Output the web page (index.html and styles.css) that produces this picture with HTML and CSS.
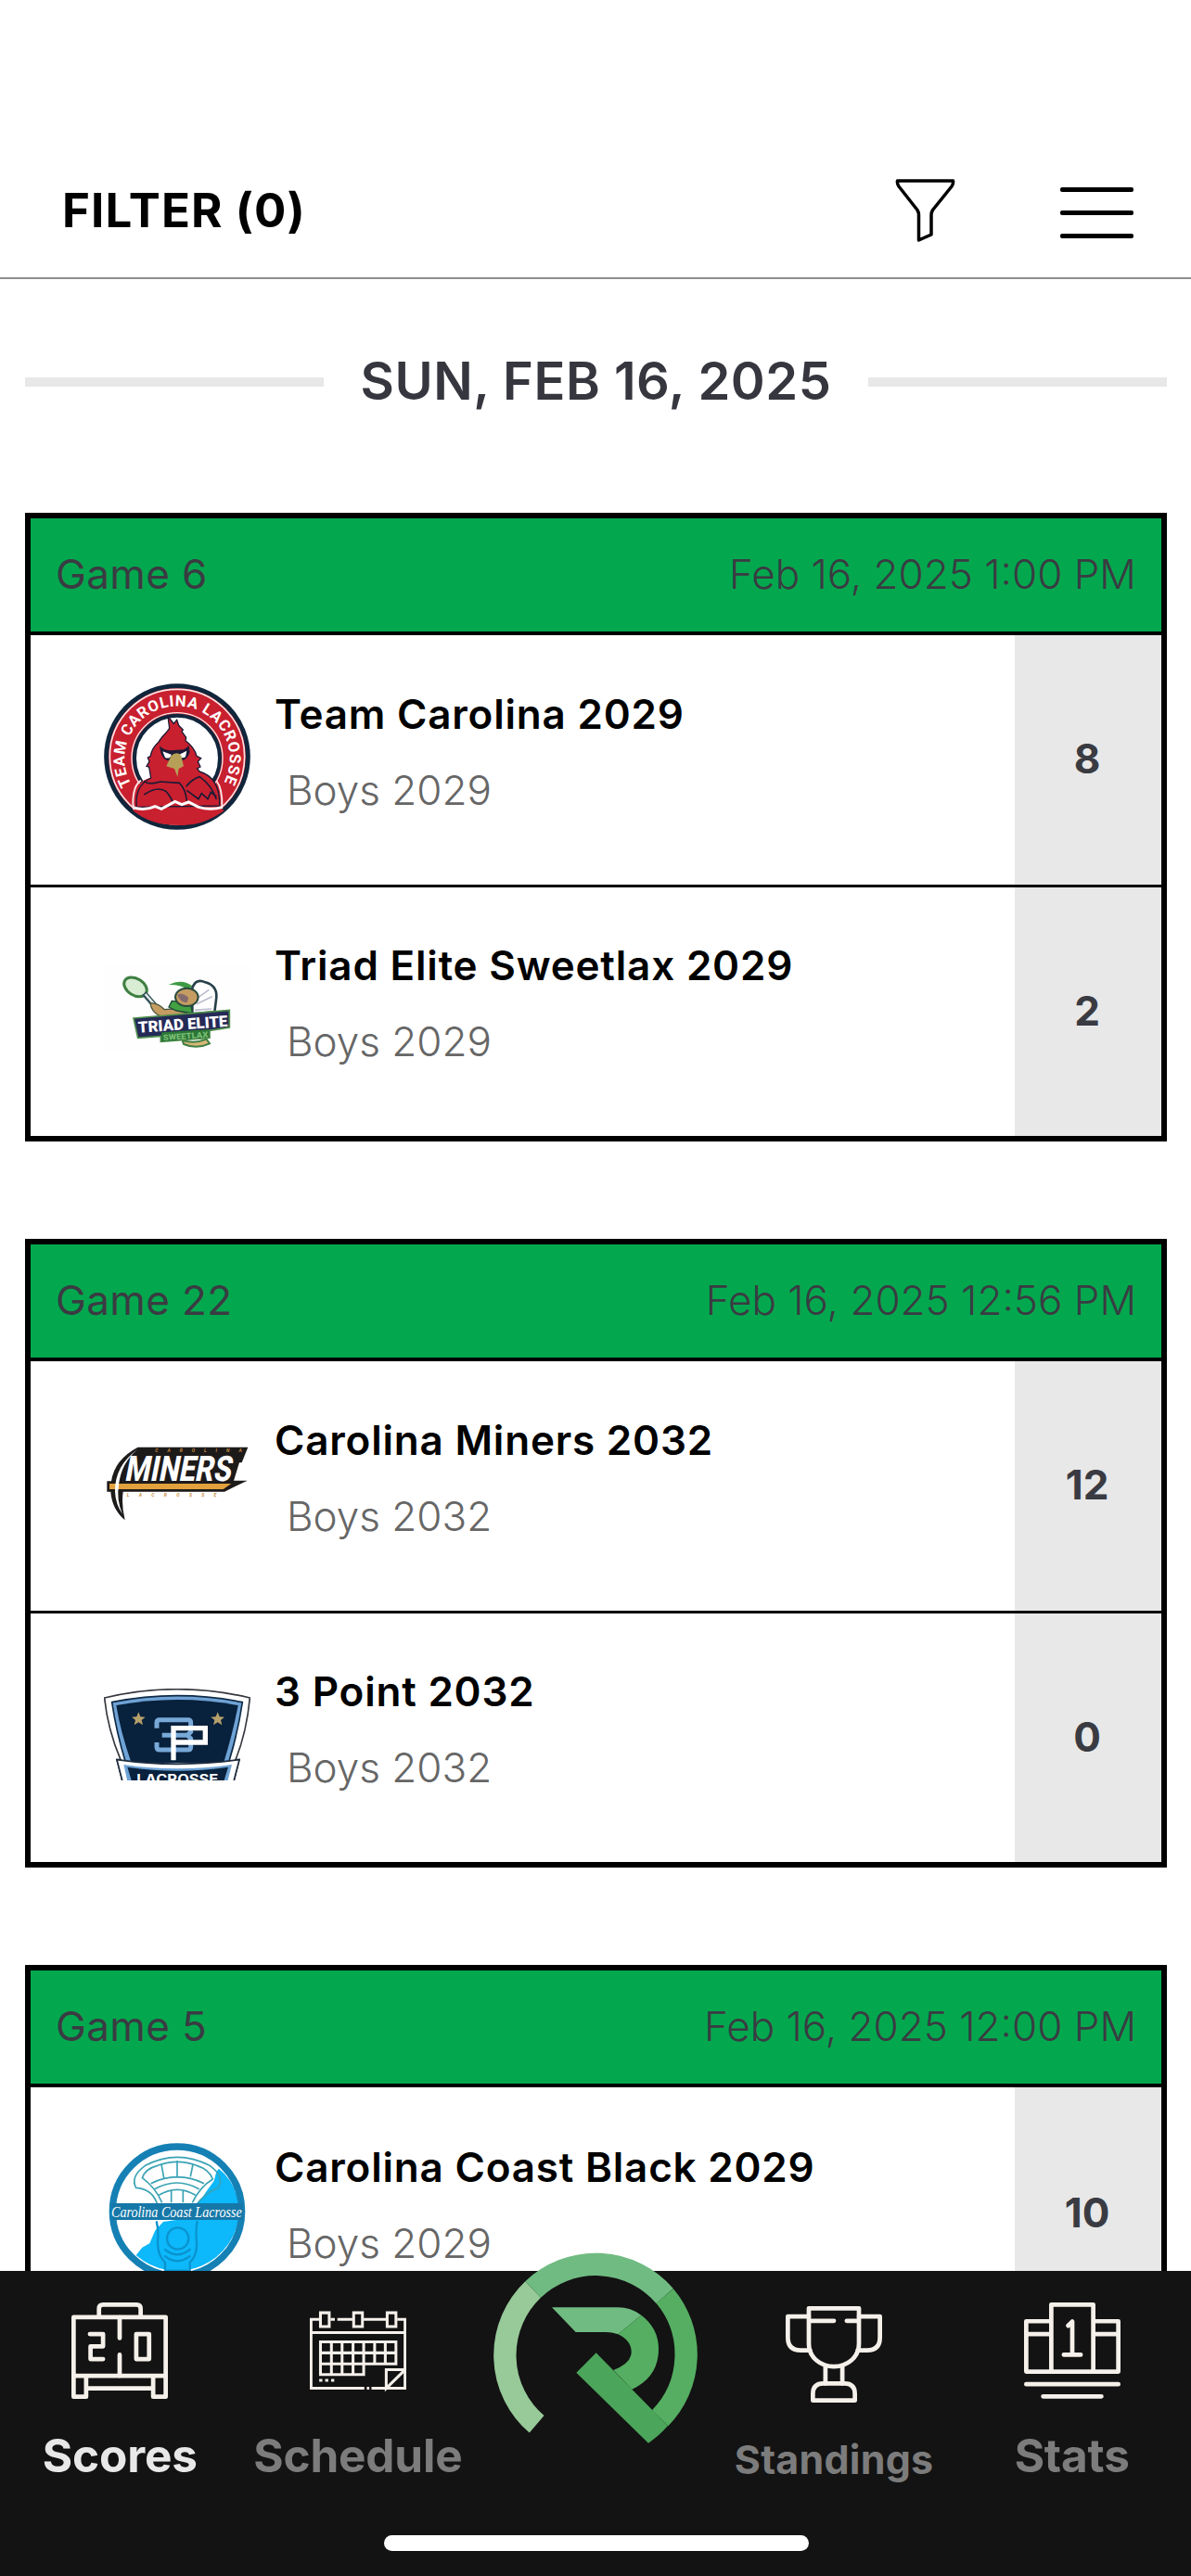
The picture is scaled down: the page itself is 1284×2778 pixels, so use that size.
FILE: index.html
```html
<!DOCTYPE html>
<html lang="en">
<head>
    <meta charset="UTF-8">
    <meta name="viewport" content="width=device-width, initial-scale=1.0">
    <title>Scores</title>
    <link rel="stylesheet" href="styles.css">
</head>
<body>
    <header class="top-bar">
        <span class="filter-label">FILTER (0)</span>
        <svg class="funnel-icon" viewBox="0 0 65 68">
            <path d="M2.500 2H62.500Q63 5 61 8L40.500 33.500Q39 36 39 39V60L25.500 66V39Q25.500 36 24 33.500L4 8Q2 5 2.500 2Z"/>
        </svg>
        <div class="menu-icon"><span></span><span></span><span></span></div>
    </header>

    <main class="content">
        <div class="date-row">
            <h1>SUN, FEB 16, 2025</h1>
        </div>

        <section class="game">
            <div class="game-header">
                <span class="game-name">Game 6</span>
                <span class="game-time">Feb 16, 2025 1:00 PM</span>
            </div>
            <div class="team-row">
                <svg class="team-logo" viewBox="66 50 474 474">
                    <circle cx="303" cy="287" r="229" fill="#c9202f" stroke="#10263c" stroke-width="15"/>
                    <circle cx="303" cy="287" r="218" fill="none" stroke="#fbe3e3" stroke-width="5"/>
                    <circle cx="303" cy="292" r="138" fill="#fff" stroke="#10263c" stroke-width="12"/>
                    <circle cx="303" cy="292" r="147" fill="none" stroke="#fbe3e3" stroke-width="4"/>
                    <path d="M164 450C150 400 175 368 215 355H390C430 370 450 400 440 450L455 462Q380 515 303 508Q220 510 160 462Z" fill="#c9202f"/>
                    <path d="M172 450C166 395 188 370 218 356L212 320L204 318L213 303L208 290L217 285C220 262 232 250 243 240C252 222 272 208 278 195L273 156L292 180L302 168L308 186L322 200L318 206L332 225L330 235C350 250 362 268 366 285L380 292L370 303L378 320L368 325L375 335C410 345 442 375 440 446Z" fill="#c9202f" stroke="#1c1a35" stroke-width="4"/>
                    <path d="M246 252Q262 270 292 266L325 264Q335 258 340 250L344 272Q336 296 318 300H276Q256 296 250 274Z" fill="#1c1a35"/>
                    <path d="M256 270L284 280Q280 296 264 290ZM334 268L310 280Q314 296 330 288Z" fill="#fff"/>
                    <path d="M283 285Q300 268 316 283L324 318L308 326L304 352L294 326L268 318Z" fill="#b6a057"/>
                    <path d="M196 366Q212 380 248 368L310 372Q330 390 334 430M196 410Q240 380 268 400Q285 420 290 438M332 384Q350 360 376 352Q415 380 430 425M334 396L372 424L382 406L402 424L412 402L430 416" fill="none" stroke="#1c1a35" stroke-width="5"/>
                    <path d="M160 452Q200 462 232 448L252 456L296 432L318 442L340 434L372 450Q410 462 450 450" fill="none" stroke="#fff" stroke-width="9"/>
                    <path d="M164 458L160 440Q160 380 186 364M448 450Q450 390 430 365" fill="none" stroke="#fbe3e3" stroke-width="6"/>
                    <path id="ring" d="M155 377A170 170 0 1 1 451 377" fill="none"/>
                    <text class="crest-text"><textPath href="#ring" textLength="700">TEAM CAROLINA LACROSSE</textPath></text>
                </svg>
                <div class="team-info">
                    <h2>Team Carolina 2029</h2>
                    <p>Boys 2029</p>
                </div>
                <div class="score">8</div>
            </div>
            <div class="team-row">
                <svg class="team-logo wide" viewBox="66 48 474 297">
                    <rect x="70" y="50" width="468" height="293" fill="#fdfefd"/>
                    <path d="M275 120Q320 98 352 124L340 136Q310 118 275 120Z" fill="#3f9a45"/>
                    <path d="M352 130Q364 98 394 112Q432 122 430 160L424 208L352 214Z" fill="#fff" stroke="#28404a" stroke-width="8"/>
                    <path d="M372 160L406 136M366 182L416 158M360 202L414 198" fill="none" stroke="#b9bccb" stroke-width="5"/>
                    <ellipse cx="168" cy="127" rx="40" ry="27" transform="rotate(32 168 127)" fill="#d9edd4" stroke="#3f7f42" stroke-width="9"/>
                    <path d="M196 148L245 204" stroke="#34505a" stroke-width="18"/>
                    <path d="M200 150L238 194" stroke="#e9f1ee" stroke-width="7"/>
                    <path d="M216 180Q238 176 262 200L290 198L346 216L250 222Q220 210 216 180Z" fill="#c59c62" stroke="#49563f" stroke-width="4"/>
                    <path d="M286 172L346 180L352 212L300 204L276 192Z" fill="#43a142" stroke="#234a3a" stroke-width="4"/>
                    <ellipse cx="334" cy="160" rx="37" ry="29" fill="#c59c62" stroke="#294a3e" stroke-width="6"/>
                    <path d="M304 152Q320 144 340 162L334 178Q310 174 304 152Z" fill="#836a6d"/>
                    <path d="M320 300Q360 312 398 296L408 310Q366 330 324 312Z" fill="#d9b778" stroke="#3f7f42" stroke-width="6"/>
                    <path d="M162 228L472 202V258L408 268V292L250 304V286L176 292Z" fill="#252a57" stroke="#4f8f4b" stroke-width="5"/>
                    <path d="M252 274L406 264V290L252 304Z" fill="#2b7537"/>
                    <text class="triad-text" x="178" y="275" textLength="290" lengthAdjust="spacingAndGlyphs" transform="rotate(-4 178 275)">TRIAD ELITE</text>
                    <text class="sweetlax-text" x="258" y="300" textLength="146" lengthAdjust="spacingAndGlyphs" transform="rotate(-4 258 300)">SWEETLAX</text>
                </svg>
                <div class="team-info">
                    <h2>Triad Elite Sweetlax 2029</h2>
                    <p>Boys 2029</p>
                </div>
                <div class="score">2</div>
            </div>
        </section>

        <section class="game">
            <div class="game-header">
                <span class="game-name">Game 22</span>
                <span class="game-time">Feb 16, 2025 12:56 PM</span>
            </div>
            <div class="team-row">
                <svg class="team-logo wide" viewBox="66 58 474 297">
                    <path d="M176 90H532L512 140H504L486 198H530L456 234H128Q122 275 134 326Q92 290 88 234H76V200H90Q100 130 176 90Z" fill="#1d1a1a"/>
                    <path d="M84 208H478L452 226H84Z" fill="#e2a13c"/>
                    <path d="M176 96Q100 150 102 234Q104 275 126 306Q106 262 114 212Q122 140 176 96Z" fill="#fff"/>
                    <text class="miners-text" x="132" y="198" textLength="344" lengthAdjust="spacingAndGlyphs" transform="translate(38 0) skewX(-11)">MINERS</text>
                    <text class="miners-small" x="232" y="107" textLength="280">CAROLINA</text>
                    <text class="miners-small" x="140" y="249" textLength="290">LACROSSE</text>
                </svg>
                <div class="team-info">
                    <h2>Carolina Miners 2032</h2>
                    <p>Boys 2032</p>
                </div>
                <div class="score">12</div>
            </div>
            <div class="team-row">
                <svg class="team-logo wide" viewBox="66 60 474 297">
                    <path d="M68 90Q303 34 538 90Q528 200 492 290H504L486 360H126L108 290H120Q78 190 68 90Z" fill="#fff" stroke="#35383d" stroke-width="5"/>
                    <path d="M92 104Q303 62 514 104Q500 200 470 298H136Q106 200 92 104Z" fill="#6fa3d6" stroke="#0f2b47" stroke-width="5"/>
                    <path d="M106 114Q303 78 500 114Q484 200 454 298H154Q120 200 106 114Z" fill="#08213c"/>
                    <path d="M108 290Q303 318 504 290L486 360H126Z" fill="#fff" stroke="#1d2c3f" stroke-width="5"/>
                    <path d="M130 306Q303 332 480 306L466 360H142Z" fill="#6fa3d6"/>
                    <path d="M142 314Q303 338 468 314L454 360H156Z" fill="#08213c"/>
                    <path id="star" d="M178 136L184 151L200 152L188 162L192 178L178 169L164 178L168 162L156 152L172 151Z" fill="#b6a06b"/>
                    <use href="#star" x="256"/>
                    <path d="M237 188V170Q237 161 246 161H338Q347 161 347 170V200L336 211H254M336 211L347 222V248Q347 258 338 258H246Q237 258 237 248V234" fill="none" stroke="#78a9d8" stroke-width="15"/>
                    <path d="M291 292V188H394V234H291" fill="none" stroke="#fff" stroke-width="16"/>
                    <text class="point-text" x="172" y="368" textLength="264" lengthAdjust="spacingAndGlyphs">LACROSSE</text>
                </svg>
                <div class="team-info">
                    <h2>3 Point 2032</h2>
                    <p>Boys 2032</p>
                </div>
                <div class="score">0</div>
            </div>
        </section>

        <section class="game">
            <div class="game-header">
                <span class="game-name">Game 5</span>
                <span class="game-time">Feb 16, 2025 12:00 PM</span>
            </div>
            <div class="team-row">
                <svg class="team-logo" viewBox="66 69 474 474">
                    <circle cx="303" cy="308" r="208" fill="#fff"/>
                    <path d="M438 170Q500 220 504 308A201 201 0 0 1 170 450L190 425L214 412L232 370L258 342L300 336L380 270L400 240L422 210L430 180Z" fill="#0db8fb"/>
                    <g fill="none" stroke="#3aa3b5" stroke-width="5">
                        <path d="M240 290Q226 236 170 232Q150 196 200 160Q303 106 408 160Q458 196 436 232Q390 250 364 290"/>
                        <path d="M254 280Q232 230 190 200Q200 170 240 160Q303 136 366 160Q406 172 418 204Q376 230 352 280"/>
                        <path d="M218 218Q303 176 390 218M230 236Q303 196 374 236M244 256Q303 220 362 256M303 144V200M252 156L260 200M354 156L346 196M284 238V280M322 238V280"/>
                    </g>
                    <g fill="none" stroke="#0a93cf" stroke-width="7">
                        <path d="M236 340Q244 370 240 410Q240 450 264 474V500H344V474Q368 450 366 410Q362 370 368 340"/>
                        <circle cx="305" cy="396" r="35"/>
                        <path d="M262 430Q303 466 346 430M262 452Q303 486 346 452"/>
                    </g>
                    <circle cx="303" cy="308" r="209" fill="none" stroke="#1580b4" stroke-width="22"/>
                    <rect x="92" y="282" width="424" height="54" fill="#1678a8"/>
                    <text class="coast-text" x="90" y="326" textLength="422" lengthAdjust="spacingAndGlyphs">Carolina Coast Lacrosse</text>
                </svg>
                <div class="team-info">
                    <h2>Carolina Coast Black 2029</h2>
                    <p>Boys 2029</p>
                </div>
                <div class="score">10</div>
            </div>
        </section>
    </main>

    <nav class="tab-bar">
        <a class="tab active" href="#">
            <svg class="tab-icon" viewBox="0 0 308 308">
                <path d="M88 47V20Q88 7 101 7H208Q221 7 221 20V47M7 47H301V301H261V234H301M7 47V301H47V234H7M47 234H261M47 274H261"/>
                <path d="M154 48V114M154 167V234M59 101H101V140H61V181H101M207 101H248V181H207Z"/>
            </svg>
            <span>Scores</span>
        </a>
        <a class="tab" href="#">
            <svg class="tab-icon thin" viewBox="0 -28 308 308">
                <path d="M30 26H4V246H174M197 246H304V26H279M66 26H80M88 26H136M172 26H243M4 68H304M182 246H190"/>
                <path d="M34 5H62V49H34ZM140 5H168V49H140ZM247 5H275V49H247Z"/>
                <path d="M34 98H275V168H34ZM34 133H275M34 168V202H172V98M69 98V202M103 98V202M138 98V202M207 98V168M241 98V168"/>
                <path d="M304 187H244V246L304 187M30 221H40M49 221H59M68 221H78"/>
            </svg>
            <span>Schedule</span>
        </a>
        <a class="tab home" href="#">
            <svg class="home-logo" viewBox="92 87 663 663">
                <g fill="none" stroke-width="73">
                    <path d="M232 643A294 294 0 0 1 220 207" stroke="#97c999"/>
                    <path d="M220 207A294 294 0 0 1 646 228" stroke="#70bb82"/>
                    <path d="M646 228A294 294 0 0 1 631 623" stroke="#55ae62"/>
                </g>
                <path d="M281 265H495Q535 265 570 290L495 352Q475 345 455 345H358Z" fill="#70bb82"/>
                <path d="M570 290Q626 332 626 400Q626 490 540 530L480 468Q538 445 538 410Q538 372 495 352Z" fill="#55ae62"/>
                <path d="M424 412L656 648Q628 680 593 704L360 476Z" fill="#4ba55a"/>
            </svg>
        </a>
        <a class="tab standings" href="#">
            <svg class="tab-icon" viewBox="0 0 308 308">
                <path d="M74 7H234V120C234 165 195 193 154 193C113 193 74 165 74 120ZM74 47H154M195 47H234"/>
                <path d="M74 33H7V100Q7 141 48 141H78M234 33H301V100Q301 141 260 141H230M127 193V247M181 193V247"/>
                <path d="M87 301V280Q87 247 120 247H188Q221 247 221 280V301Z"/>
            </svg>
            <span>Standings</span>
        </a>
        <a class="tab" href="#">
            <svg class="tab-icon" viewBox="0 0 308 308">
                <path d="M87 221V7H221V221M87 60H7V221H301V60H221M7 101H87M221 101H301"/>
                <path d="M141 74L154 61V167M127 167H181M7 261H301M61 300H247"/>
            </svg>
            <span>Stats</span>
        </a>
        <div class="home-indicator"></div>
    </nav>
</body>
</html>
```
FILE: styles.css
```css
* {
    box-sizing: border-box;
}

body {
    margin: 0;
    width: 1284px;
    height: 2778px;
    overflow: hidden;
    display: flex;
    flex-direction: column;
    background-color: #fff;
    font-family: Inter, "Liberation Sans", sans-serif;
}

h1, h2, p {
    margin: 0;
}

/* Header */
.top-bar {
    flex: none;
    display: flex;
    align-items: center;
    height: 301px;
    padding: 155px 62px 0 67px;
    border-bottom: 2px solid #8e8e8e;
}

.filter-label {
    flex: 1;
    margin-bottom: 2px;
    font-size: 51px;
    font-weight: 650;
    letter-spacing: 1.1px;
    color: #000;
}

.funnel-icon {
    width: 65px;
    height: 68px;
    margin-right: 113px;
    fill: none;
    stroke: #000;
    stroke-width: 3.5;
    stroke-linejoin: round;
}

.menu-icon {
    width: 79px;
    margin-top: 4px;
    display: flex;
    flex-direction: column;
    gap: 20px;
}

.menu-icon span {
    height: 5px;
    border-radius: 2px;
    background-color: #000;
}

/* Games list */
.content {
    flex: 1;
    min-height: 0;
    overflow: hidden;
    padding: 0 26px 0 27px;
}

.date-row {
    display: flex;
    align-items: center;
    gap: 40px;
    height: 222px;
    margin-bottom: 30px;
}

.date-row::before,
.date-row::after {
    content: "";
    flex: 1;
    height: 10px;
    background-color: #e8e8e8;
}

.date-row h1 {
    padding-bottom: 2px;
    font-size: 56px;
    font-weight: 600;
    letter-spacing: 0.5px;
    color: #35363e;
}

.game {
    border: 6px solid #000;
    margin-bottom: 105px;
}

.game-header {
    display: flex;
    justify-content: space-between;
    align-items: center;
    height: 126px;
    padding: 0 27px 2px 27px;
    border-bottom: 4px solid #000;
    background-color: #03a84e;
    color: #3a3b42;
    font-size: 44px;
}

.game-name {
    font-weight: 400;
    letter-spacing: 0.4px;
}

.game-time {
    font-weight: 300;
}

.team-row {
    display: flex;
    align-items: center;
    height: 272px;
    padding-left: 79px;
}

.team-row + .team-row {
    height: 268px;
}

.team-row:not(:last-child) {
    border-bottom: 3px solid #000;
}

.team-logo {
    flex: none;
    width: 158px;
    height: 158px;
    margin-bottom: 7px;
}

.team-logo.wide {
    height: 99px;
}

.team-info {
    flex: 1;
    padding: 0 0 18px 26px;
}

.team-info h2 {
    font-size: 44px;
    font-weight: 600;
    line-height: 82px;
    letter-spacing: 0.8px;
    color: #000;
}

.team-info p {
    padding-left: 13px;
    font-size: 44px;
    font-weight: 300;
    line-height: 82px;
    color: #666;
}

.score {
    align-self: stretch;
    display: flex;
    align-items: center;
    justify-content: center;
    width: 158px;
    padding: 0 2px 3px 0;
    background-color: #e8e8e8;
    color: #3a3b42;
    font-size: 44px;
    font-weight: 650;
}

/* Lettering inside the team logos */
.crest-text {
    font: 700 50px Roboto, sans-serif;
    fill: #fff;
}

.triad-text {
    font: 900 50px Roboto, sans-serif;
    fill: #fff;
}

.sweetlax-text {
    font: 900 26px Roboto, sans-serif;
    fill: #79bd72;
}

.miners-text {
    font: 800 114px Roboto, sans-serif;
    fill: #fff;
}

.miners-small {
    font: italic 700 15px Roboto, sans-serif;
    fill: #c98d3c;
}

.point-text {
    font: 700 42px Inter, sans-serif;
    fill: #fff;
}

.coast-text {
    font: italic 400 50px "Liberation Serif", serif;
    fill: #fff;
}

/* Bottom tabs */
.tab-bar {
    position: relative;
    flex: none;
    display: flex;
    height: 329px;
    padding-left: 1px;
    background-color: #131313;
}

.tab {
    flex: 1;
    display: flex;
    flex-direction: column;
    align-items: center;
    padding-top: 34px;
    color: #7c7c7c;
    font-size: 49.5px;
    font-weight: 700;
    line-height: 60px;
    letter-spacing: -0.2px;
    text-decoration: none;
}

.tab.active {
    color: #e8e8e8;
}

.tab.standings {
    padding-top: 38px;
    font-size: 43px;
    letter-spacing: 0.2px;
}

.tab-icon {
    width: 104px;
    height: 104px;
    margin-bottom: 31px;
    fill: none;
    stroke: #f5f0ea;
    stroke-width: 14;
    stroke-linecap: round;
    stroke-linejoin: round;
}

.tab-icon.thin {
    stroke-width: 9;
    stroke-linecap: butt;
    stroke-linejoin: miter;
}

.tab.home {
    padding-top: 0;
}

.home-logo {
    width: 221px;
    height: 221px;
    margin-top: -20px;
}

.home-indicator {
    position: absolute;
    left: 414px;
    bottom: 27px;
    width: 458px;
    height: 17px;
    border-radius: 9px;
    background-color: #fff;
}
```
